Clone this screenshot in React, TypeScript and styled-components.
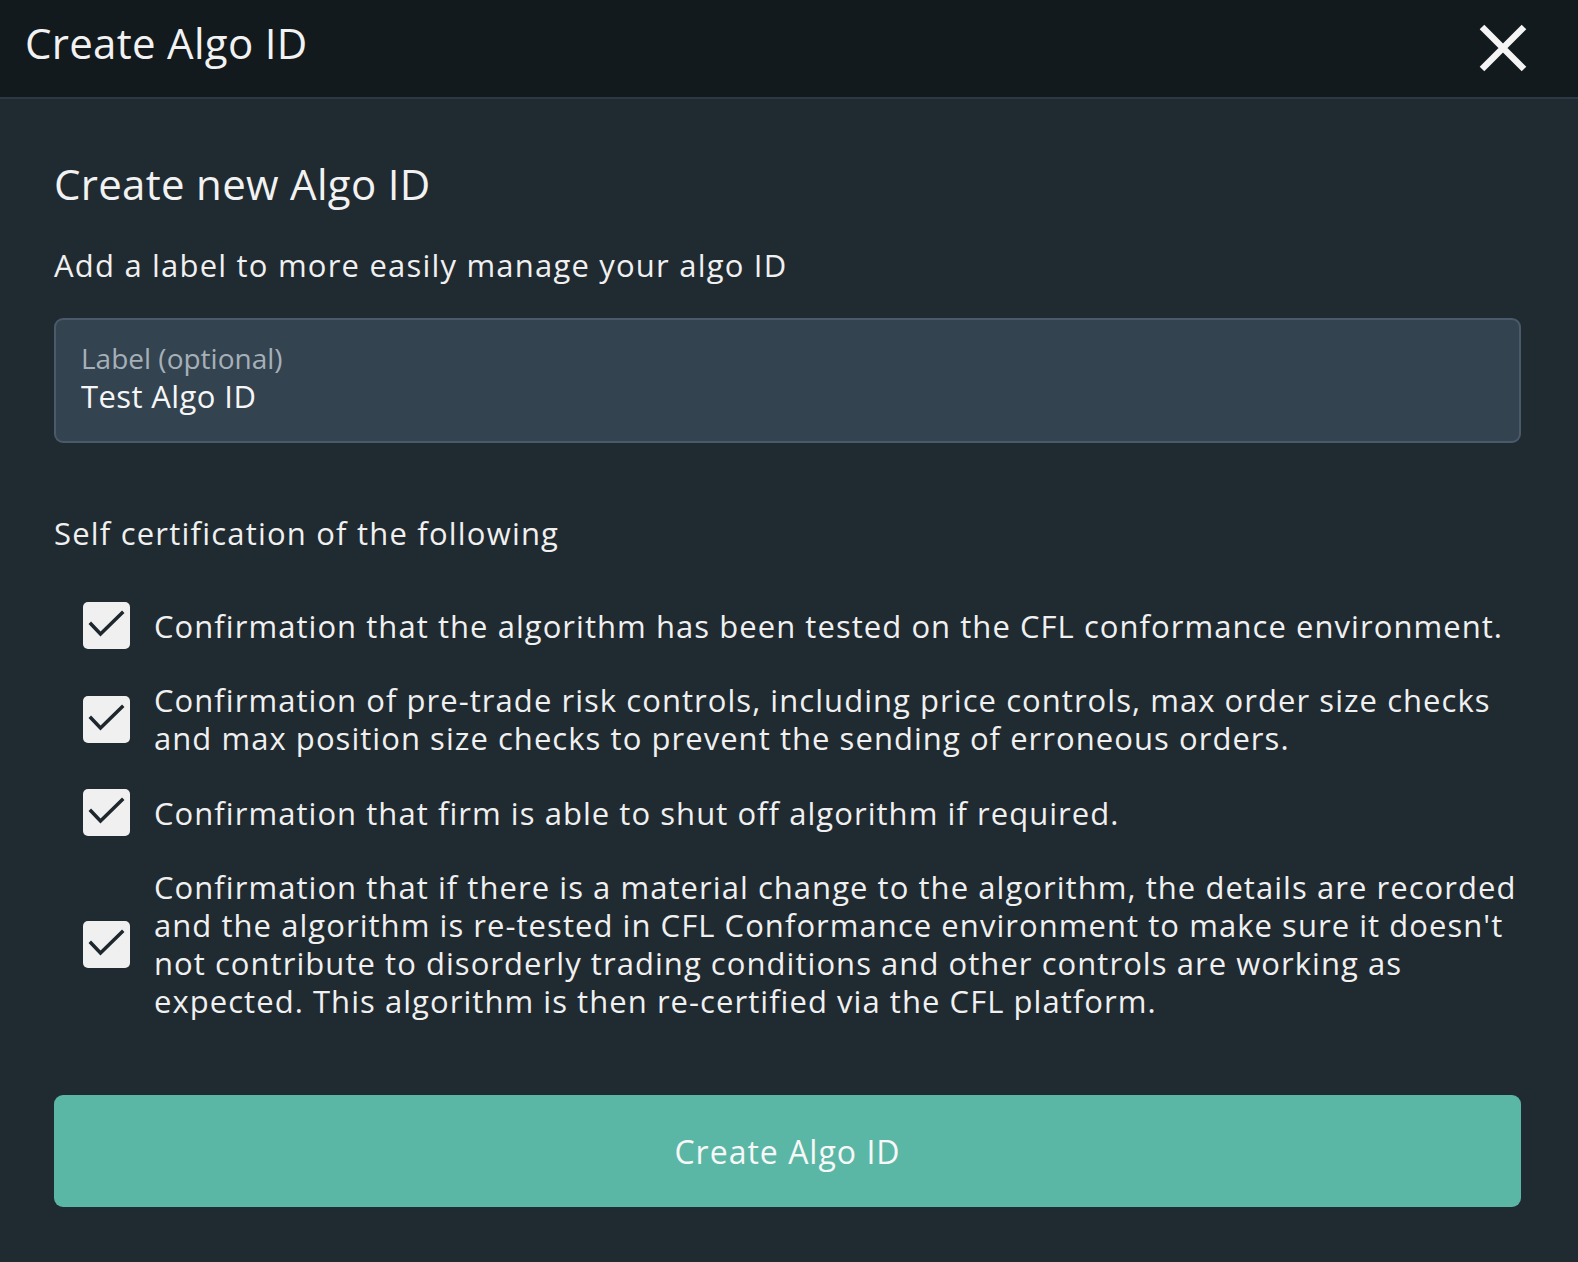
import React from "react";
import styled, { createGlobalStyle } from "styled-components";

const Global = createGlobalStyle`
  html, body { margin: 0; padding: 0; background: #202a31; }
  body { font-family: "Open Sans", "Noto Sans", sans-serif; color: #f0f0f0; }
  * { box-sizing: border-box; }
`;

const Page = styled.div`
  width: 1578px;
  min-height: 1262px;
  background: #202a31;
  display: flex;
  flex-direction: column;
`;

const Header = styled.header`
  height: 99px;
  background: #121a1e;
  border-bottom: 2px solid #2b3846;
  display: flex;
  align-items: center;
  justify-content: space-between;
  padding: 0 50px 12px 25px;
`;

const HeaderTitle = styled.h1`
  margin: 0;
  font-size: 42px;
  font-weight: 400;
  line-height: 48px;
  letter-spacing: 0.3px;
  color: #f2f2f2;
`;

const CloseButton = styled.button`
  background: none;
  border: none;
  padding: 0;
  margin-top: 10px;
  width: 50px;
  height: 50px;
  display: flex;
  align-items: center;
  justify-content: center;
  cursor: pointer;
`;

const Body = styled.main`
  display: flex;
  flex-direction: column;
  padding: 60px 57px 55px 54px;
`;

const Heading = styled.h2`
  margin: 0;
  font-size: 42px;
  font-weight: 400;
  line-height: 50px;
  letter-spacing: 0.3px;
  color: #f2f2f2;
`;

const Text = styled.p<{ $mt: number }>`
  margin: ${(p) => p.$mt}px 0 0;
  font-size: 31px;
  line-height: 38px;
  letter-spacing: 1.2px;
  color: #f0f0f0;
`;

const Field = styled.div`
  margin-top: 34px;
  height: 125px;
  background: #344350;
  border: 2px solid #4a5a6a;
  border-radius: 9px;
  padding: 21px 25px 0;
  display: flex;
  flex-direction: column;
`;

const FieldLabel = styled.label`
  font-size: 28px;
  line-height: 34px;
  color: #a6b0b8;
`;

const FieldValue = styled.div`
  margin-top: 2px;
  font-size: 31px;
  line-height: 38px;
  letter-spacing: 0.4px;
  color: #f6f6f6;
`;

const List = styled.ul`
  list-style: none;
  margin: 50px -14px 0 0;
  padding: 0 0 0 29px;
  display: flex;
  flex-direction: column;
  gap: 32px;
`;

const Row = styled.li`
  display: flex;
  align-items: center;
  gap: 24px;
`;

const Box = styled.span`
  flex: none;
  width: 47px;
  height: 47px;
  border-radius: 5px;
  background: #f0f0f0;
  display: flex;
  align-items: center;
  justify-content: center;
`;

const RowText = styled.span`
  font-size: 31px;
  line-height: 38px;
  letter-spacing: 1.05px;
  color: #f0f0f0;
`;

const Submit = styled.button`
  margin-top: 75px;
  height: 112px;
  width: 100%;
  border: none;
  border-radius: 9px;
  background: #5bb7a5;
  color: #f7f7f7;
  font-family: inherit;
  font-size: 32px;
  letter-spacing: 1px;
  cursor: pointer;
`;

const Check = () => (
  <svg width="47" height="47" viewBox="0 0 47 47">
    <path d="M8 22 L17.5 32 L39 11" fill="none" stroke="#1e272d" strokeWidth="3.5" strokeLinecap="square" />
  </svg>
);

const items = [
  "Confirmation that the algorithm has been tested on the CFL conformance environment.",
  "Confirmation of pre-trade risk controls, including price controls, max order size checks and max position size checks to prevent the sending of erroneous orders.",
  "Confirmation that firm is able to shut off algorithm if required.",
  "Confirmation that if there is a material change to the algorithm, the details are recorded and the algorithm is re-tested in CFL Conformance environment to make sure it doesn't not contribute to disorderly trading conditions and other controls are working as expected. This algorithm is then re-certified via the CFL platform.",
];

export default function App() {
  return (
    <Page>
      <Global />
      <Header>
        <HeaderTitle>Create Algo ID</HeaderTitle>
        <CloseButton aria-label="Close">
          <svg width="48" height="48" viewBox="0 0 48 48">
            <path d="M3 3 L45 45 M45 3 L3 45" stroke="#f4f4f4" strokeWidth="6.5" />
          </svg>
        </CloseButton>
      </Header>
      <Body>
        <Heading>Create new Algo ID</Heading>
        <Text $mt={37}>Add a label to more easily manage your algo ID</Text>
        <Field>
          <FieldLabel>Label (optional)</FieldLabel>
          <FieldValue>Test Algo ID</FieldValue>
        </Field>
        <Text $mt={71}>Self certification of the following</Text>
        <List>
          {items.map((t) => (
            <Row key={t}>
              <Box>
                <Check />
              </Box>
              <RowText>{t}</RowText>
            </Row>
          ))}
        </List>
        <Submit>Create Algo ID</Submit>
      </Body>
    </Page>
  );
}
